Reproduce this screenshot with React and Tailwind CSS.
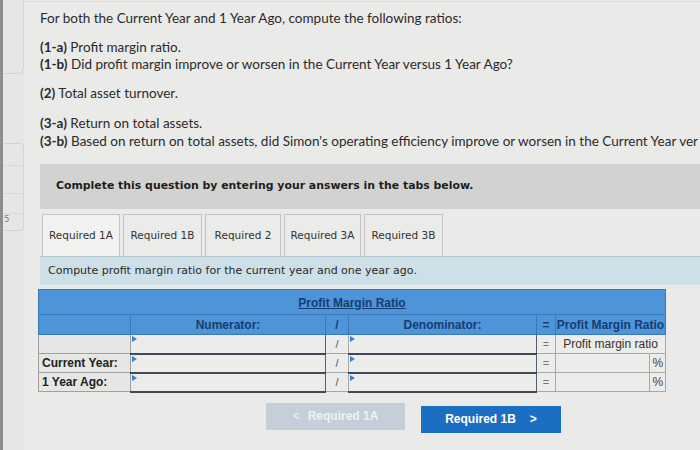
import React from 'react'

const tabs = [
  { label: 'Required 1A', w: 'w-[78px]', active: true },
  { label: 'Required 1B', w: 'w-[79px]' },
  { label: 'Required 2', w: 'w-[76px]' },
  { label: 'Required 3A', w: 'w-[77px]' },
  { label: 'Required 3B', w: 'w-[79px]' },
]

const InputCell = () => (
  <td className="relative p-0 bg-[#ececea] border border-[#55606c] border-b-2 border-b-[#3f4a56]">
    <span className="absolute left-[1px] top-[1px] w-0 h-0 border-t-[3px] border-b-[3px] border-l-[5px] border-t-transparent border-b-transparent border-l-[#3b7fc4]" />
  </td>
)

const SlashCell = () => (
  <td className="p-0 text-center text-[11px] text-[#555] border border-[#a8a8a8] bg-[#ececea]">/</td>
)

const EqCell = () => (
  <td className="p-0 text-center text-[11px] text-[#777] border border-[#a8a8a8] bg-[#ececea]">=</td>
)

const DataRow = ({ label }) => (
  <tr className="h-[19px]">
    <td className="p-0 pl-[3px] font-bold text-[12px] text-[#222] border border-[#a0a0a0] bg-[#e6e6e5] whitespace-nowrap">{label}</td>
    <InputCell />
    <SlashCell />
    <InputCell />
    <EqCell />
    <td className="p-0 border border-[#a8a8a8] bg-[#ececea]" />
    <td className="p-0 text-right pr-[2px] text-[12px] text-[#444] border border-[#a8a8a8] bg-[#ececea]">%</td>
  </tr>
)

export default function App() {
  return (
    <div className="w-[700px] h-[450px] overflow-hidden flex bg-[#eaeae8]" style={{ fontFamily: 'Lato, "Open Sans", sans-serif' }}>
      {/* left edge of neighbouring panel */}
      <div className="w-[24px] shrink-0 border-l-[3px] border-[#8d8d8b] bg-[#e6e6e4] flex flex-col">
        <div className="h-[74px] border-b border-r border-[#d3d3d1] rounded-br-[6px]" />
        <div className="mt-[69px] h-[88px] border-y border-r border-[#d3d3d1] rounded-r-[4px] flex flex-col">
          <div className="h-[22px] border-b border-[#d8d8d6]" />
          <div className="h-[28px] border-b border-[#d8d8d6]" />
          <div className="h-[20px] border-b border-[#d8d8d6]" />
          <div className="text-[9px] text-[#777] leading-none pl-[1px]">5</div>
        </div>
      </div>

      <div className="flex-1 min-w-0 pl-[14px] pt-[7px] border-t border-[#dcdcda] mt-[1px]">
        <div className="pl-[2px] text-[13.5px] leading-[18px] text-[#2b2b2b] whitespace-nowrap overflow-hidden">
          <p>For both the Current Year and 1 Year Ago, compute the following ratios:</p>
          <p className="mt-[11px]"><b>(1-a)</b> Profit margin ratio.</p>
          <p className="-mt-[1px]"><b>(1-b)</b> Did profit margin improve or worsen in the Current Year versus 1 Year Ago?</p>
          <p className="mt-[11px]"><b>(2)</b> Total asset turnover.</p>
          <p className="mt-[12px]"><b>(3-a)</b> Return on total assets.</p>
          <p><b>(3-b)</b> Based on return on total assets, did Simon's operating efficiency improve or worsen in the Current Year ver</p>
        </div>

        <div className="ml-[2px] mt-[14px] h-[45px] bg-[#d2d2d0] flex items-center pl-[16px] whitespace-nowrap" style={{ fontFamily: '"DejaVu Sans", Verdana, sans-serif' }}>
          <span className="text-[10.9px] font-bold text-[#1e1e1e]">Complete this question by entering your answers in the tabs below.</span>
        </div>

        <div className="ml-[4px] mt-[5px] flex gap-[3px] h-[42px] items-end" style={{ fontFamily: '"DejaVu Sans", Verdana, sans-serif' }}>
          {tabs.map(t => (
            <div
              key={t.label}
              className={`${t.w} h-[42px] flex items-center justify-center text-[10.5px] text-[#333] border border-[#c4c4c2] border-b-0 ${t.active ? 'bg-[#f1f1ef]' : 'bg-[#ebebe9]'}`}
            >
              {t.label}
            </div>
          ))}
        </div>

        <div className="ml-[2px] h-[29px] bg-[#cddfe7] border-t border-[#b9c9d1] flex items-center pl-[8px] whitespace-nowrap" style={{ fontFamily: '"DejaVu Sans", Verdana, sans-serif' }}>
          <span className="text-[11px] text-[#2a2a2a]">Compute profit margin ratio for the current year and one year ago.</span>
        </div>

        <table className="mt-[4px] border-collapse table-fixed w-[627px]" style={{ fontFamily: '"Liberation Sans", Arial, sans-serif' }}>
          <colgroup>
            <col className="w-[92px]" />
            <col className="w-[195px]" />
            <col className="w-[23px]" />
            <col className="w-[188px]" />
            <col className="w-[19px]" />
            <col className="w-[94px]" />
            <col className="w-[16px]" />
          </colgroup>
          <tbody>
            <tr className="h-[20px] bg-[#4d94d9]">
              <td colSpan={7} className="p-0 text-center border border-[#3a78b8]">
                <span className="text-[12px] font-bold text-[#173d70] underline">Profit Margin Ratio</span>
              </td>
            </tr>
            <tr className="h-[20px] bg-[#4d94d9] text-[12px] font-bold text-[#173d70]">
              <td className="p-0 border border-[#3a78b8]" />
              <td className="p-0 text-center border border-[#3a78b8]">Numerator:</td>
              <td className="p-0 text-center border border-[#3a78b8]">/</td>
              <td className="p-0 text-center border border-[#3a78b8]">Denominator:</td>
              <td className="p-0 text-center border border-[#3a78b8]">=</td>
              <td colSpan={2} className="p-0 text-center border border-[#3a78b8] whitespace-nowrap">Profit Margin Ratio</td>
            </tr>
            <tr className="h-[19px]">
              <td className="p-0 border border-[#a0a0a0] bg-[#e6e6e5]" />
              <InputCell />
              <SlashCell />
              <InputCell />
              <EqCell />
              <td colSpan={2} className="p-0 text-center text-[12px] text-[#333] border border-[#a8a8a8] bg-[#ececea] whitespace-nowrap">Profit margin ratio</td>
            </tr>
            <DataRow label="Current Year:" />
            <DataRow label="1 Year Ago:" />
          </tbody>
        </table>

        <div className="mt-[10px] flex items-start" style={{ fontFamily: '"Liberation Sans", Arial, sans-serif' }}>
          <div className="ml-[228px] w-[139px] h-[27px] bg-[#c6cfd9] flex items-center justify-center gap-[8px] text-[12px] font-bold text-[#eef2f6]">
            <span className="font-normal">&lt;</span>
            <span>Required 1A</span>
          </div>
          <div className="ml-[16px] mt-[3px] w-[140px] h-[27px] bg-[#1b6fc2] flex items-center justify-center gap-[14px] text-[12px] font-bold text-white">
            <span>Required 1B</span>
            <span>&gt;</span>
          </div>
        </div>
      </div>
    </div>
  )
}
